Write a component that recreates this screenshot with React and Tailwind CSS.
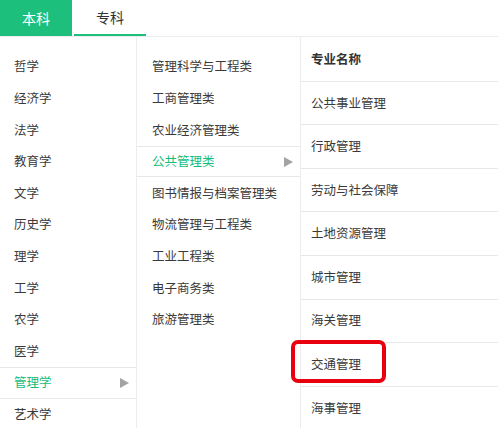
const levels = ["哲学", "经济学", "法学", "教育学", "文学", "历史学", "理学", "工学", "农学", "医学", "管理学", "艺术学"];

const categories = [
  "管理科学与工程类",
  "工商管理类",
  "农业经济管理类",
  "公共管理类",
  "图书情报与档案管理类",
  "物流管理与工程类",
  "工业工程类",
  "电子商务类",
  "旅游管理类",
];

const majors = [
  "公共事业管理",
  "行政管理",
  "劳动与社会保障",
  "土地资源管理",
  "城市管理",
  "海关管理",
  "交通管理",
  "海事管理",
];

const Arrow = () => (
  <svg width="9" height="10" viewBox="0 0 9 10" className="ml-auto mr-[7px]">
    <path d="M0 0 L9 5 L0 10 Z" fill="#a3a3a3" />
  </svg>
);

function ListRow({ label, active, pl }) {
  return (
    <div
      className={`h-[31.6px] flex items-center ${pl} ${
        active ? "border-y border-[#e8e8e8] text-[#13bd7c]" : "text-[#3a3a3a]"
      }`}
    >
      <span>{label}</span>
      {active && <Arrow />}
    </div>
  );
}

export default function App() {
  return (
    <div
      className="w-[498px] h-[428px] overflow-hidden bg-white text-[12.5px]"
      style={{ fontFamily: '"Noto Sans CJK SC", "Noto Sans", sans-serif' }}
    >
      {/* tabs */}
      <div className="h-[37px] flex border-b border-[#ececec]">
        <div className="w-[72px] h-[36px] bg-[#1dbf7c] text-white text-[14px] flex items-center justify-center">
          本科
        </div>
        <div className="ml-[2px] w-[72px] h-[36px] text-[#333] text-[14px] flex items-center justify-center border-b-2 border-[#1dbf7c]">
          专科
        </div>
      </div>

      <div className="flex h-[391px]">
        {/* level */}
        <div className="w-[137px] border-r border-[#ececec] pt-[14px]">
          {levels.map((l) => (
            <ListRow key={l} label={l} active={l === "管理学"} pl="pl-[14px]" />
          ))}
        </div>

        {/* category */}
        <div className="w-[164px] border-r border-[#ececec] pt-[14px]">
          {categories.map((c) => (
            <ListRow key={c} label={c} active={c === "公共管理类"} pl="pl-[15px]" />
          ))}
        </div>

        {/* majors */}
        <div className="flex-1 pt-[1px]">
          <div className="h-[43.6px] flex items-center pl-[10px] border-b border-[#e8e8e8] font-bold text-[#333]">
            专业名称
          </div>
          {majors.map((m) => (
            <div
              key={m}
              className="relative h-[43.6px] flex items-center pl-[10px] border-b border-[#e8e8e8] text-[#3a3a3a]"
            >
              {m}
              {m === "交通管理" && (
                <div className="absolute left-[-10px] top-[-3px] w-[95px] h-[43px] border-4 border-[#e8000f] rounded-[7px]" />
              )}
            </div>
          ))}
        </div>
      </div>
    </div>
  );
}
